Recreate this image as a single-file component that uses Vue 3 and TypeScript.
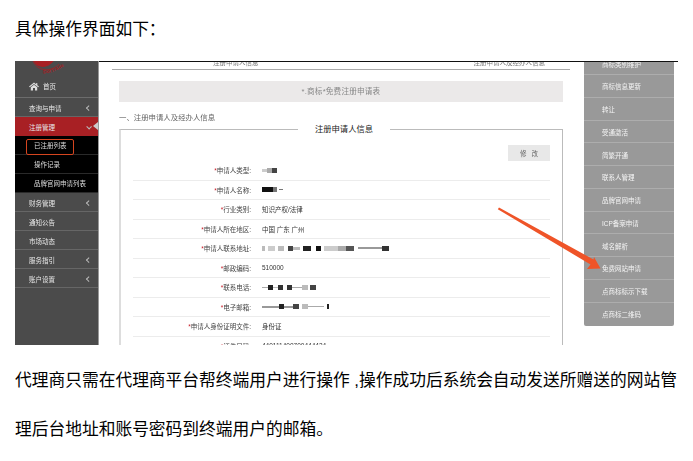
<script setup lang="ts">
interface Seg { w: number; c: string; h?: number }
interface Row { label: string; value?: string; segs?: Seg[] }

const navBefore = [{ t: '查询与申请', arrow: true }]
const subNav = ['已注册列表', '操作记录', '品牌官网申请列表']
const navAfter = [
  { t: '财务管理', arrow: true },
  { t: '通知公告', arrow: false },
  { t: '市场动态', arrow: false },
  { t: '服务指引', arrow: true },
  { t: '账户设置', arrow: true },
]
const rows: Row[] = [
  { label: '申请人类型', segs: [{ w: 5, c: '#ccc', h: 3 }, { w: 5, c: '#aaa' }, { w: 5, c: '#444' }] },
  { label: '申请人名称', segs: [{ w: 11, c: '#111' }, { w: 4, c: '#777' }, { w: 2, c: '#fff' }, { w: 4, c: '#777', h: 1 }] },
  { label: '行业类别', value: '知识产权/法律' },
  { label: '申请人所在地区', value: '中国 广东 广州' },
  {
    label: '申请人联系地址',
    segs: [
      { w: 3, c: '#bbb' }, { w: 3, c: '#fff' }, { w: 7, c: '#ccc' }, { w: 3, c: '#fff' }, { w: 6, c: '#bbb' }, { w: 4, c: '#fff' },
      { w: 5, c: '#444' }, { w: 7, c: '#bbb', h: 3 }, { w: 3, c: '#fff' }, { w: 8, c: '#222' }, { w: 5, c: '#fff' }, { w: 5, c: '#111' }, { w: 3, c: '#fff' },
      { w: 14, c: '#ccc' }, { w: 8, c: '#aaa' }, { w: 8, c: '#555' }, { w: 4, c: '#fff' },
      { w: 24, c: '#999', h: 2 }, { w: 7, c: '#333' },
    ],
  },
  { label: '邮政编码', value: '510000' },
  {
    label: '联系电话',
    segs: [
      { w: 6, c: '#aaa', h: 1 }, { w: 5, c: '#222' }, { w: 5, c: '#bbb', h: 1 }, { w: 5, c: '#333' }, { w: 4, c: '#fff' },
      { w: 5, c: '#333' }, { w: 10, c: '#aaa', h: 1 }, { w: 6, c: '#bbb' }, { w: 2, c: '#fff' }, { w: 6, c: '#444' },
    ],
  },
  {
    label: '电子邮箱',
    segs: [
      { w: 17, c: '#999', h: 2 }, { w: 5, c: '#222' }, { w: 9, c: '#999', h: 2 }, { w: 6, c: '#444' }, { w: 3, c: '#fff' },
      { w: 6, c: '#bbb' }, { w: 16, c: '#aaa', h: 1 }, { w: 3, c: '#fff' }, { w: 2, c: '#222' },
    ],
  },
  { label: '申请人身份证明文件', value: '身份证' },
  { label: '证件号码', value: '440111400700444424' },
]
const menu = ['商标类别维护', '商标信息更新', '转让', '受通激活', '简繁开通', '联系人管理', '品牌官网申请', 'ICP备案申请', '域名解析', '免费网站申请', '点商标标示下载', '点商标二维码']
</script>

<template>
  <div class="page" lang="zh-CN">
    <p class="intro">具体操作界面如下：</p>

    <div class="stage">
      <aside class="side">
        <div class="logo">
          <svg width="83" height="15" viewBox="0 0 83 15">
            <path d="M18 -2 C20 8 34 9 40 -2 Z" fill="#a82024" />
            <path d="M18 0 C22 10 36 12 44 3" fill="none" stroke="#a82024" stroke-width="0.8" />
            <path id="logoCurve" d="M28 12.5 C36 12.5 46 8.5 54 1" fill="none" />
            <text class="logo-text"><textPath href="#logoCurve">DotTrade</textPath></text>
          </svg>
        </div>
        <div class="home">
          <svg width="10" height="9" viewBox="0 0 10 9">
            <path d="M5 0.5 L7.2 2.3 V1 H8.3 V3.2 L10 4.6 L9.2 5.3 L5 1.9 L0.8 5.3 L0 4.6 Z M1.8 5.2 L5 2.7 L8.2 5.2 V8.6 H6 V6 H4 V8.6 H1.8 Z" fill="#ddd" />
          </svg>
          <span>首页</span>
        </div>
        <div v-for="n in navBefore" :key="n.t" class="nav">
          <span>{{ n.t }}</span><i v-if="n.arrow" class="chev" />
        </div>
        <div class="nav active">
          <span>注册管理</span><i class="chev down" /><b class="caret" />
        </div>
        <div v-for="(s, i) in subNav" :key="s" class="sub" :class="{ mark: i === 0 }">
          <span>{{ s }}</span>
        </div>
        <div v-for="n in navAfter" :key="n.t" class="nav">
          <span>{{ n.t }}</span><i v-if="n.arrow" class="chev" />
        </div>
      </aside>

      <div class="right">
        <main class="main">
          <div class="clipped"><span>注册申请人信息</span><span>注册申请人及经办人信息</span></div>
          <div class="band">*.商标*免费注册申请表</div>
          <div class="section">一、注册申请人及经办人信息</div>
          <section class="box">
            <h3 class="legend">注册申请人信息</h3>
            <div class="tools"><button class="edit">修 改</button></div>
            <div v-for="r in rows" :key="r.label" class="row">
              <label class="lbl"><em>*</em>{{ r.label }}:</label>
              <span v-if="r.value" class="val">{{ r.value }}</span>
              <span v-else class="mask">
                <i v-for="(s, i) in r.segs" :key="i" :style="{ width: s.w + 'px', height: (s.h ?? 5) + 'px', background: s.c }" />
              </span>
            </div>
          </section>
        </main>
        <nav class="menu">
          <div v-for="m in menu" :key="m" class="mi"><span>{{ m }}</span></div>
        </nav>
      </div>

      <svg class="arrow" width="663" height="284" viewBox="15 61 663 284">
        <path d="M499 207.4 L593.5 259.5 L594 257 L600.5 268.5 L587 269 L590.5 264.5 L497.8 209.2 Z" fill="#ef5428" />
      </svg>
    </div>

    <p class="para">代理商只需在代理商平台帮终端用户进行操作 ,操作成功后系统会自动发送所赠送的网站管理后台地址和账号密码到终端用户的邮箱。</p>
  </div>
</template>

<style scoped>
.page {
  width: 693px;
  height: 461px;
  overflow: hidden;
  padding: 0 15px;
  box-sizing: border-box;
  font-family: "Liberation Sans", "Noto Sans CJK SC", sans-serif;
  background: #fff;
  color: #000;
}
.intro {
  margin: 0;
  height: 61px;
  padding-top: 18px;
  box-sizing: border-box;
  font-size: 16.74px;
  line-height: 24px;
}
.para {
  margin: 11px 0 0;
  font-size: 16.74px;
  line-height: 49px;
}
.stage {
  position: relative;
  display: flex;
  width: 663px;
  height: 284px;
  overflow: hidden;
  filter: blur(0.45px);
}
.side {
  width: 84px;
  flex: none;
  background: #4b4b4b;
  border-right: 1px solid #999;
  box-sizing: border-box;
  color: #e8e8e8;
  font-size: 6.5px;
}
.logo {
  height: 14px;
  overflow: hidden;
}
.logo svg { display: block; }
.logo-text {
  font-size: 4.8px;
  font-weight: 700;
  fill: #a82024;
  letter-spacing: 0.3px;
}
.home {
  display: flex;
  align-items: center;
  gap: 4px;
  height: 23px;
  padding-left: 14px;
  border-bottom: 1px solid #6c6c6c;
  box-sizing: border-box;
}
.nav {
  position: relative;
  display: flex;
  align-items: center;
  justify-content: space-between;
  height: 19px;
  padding: 1px 8px 0 14px;
  border-bottom: 1px solid #666;
  box-sizing: border-box;
}
.nav.active {
  background: #a82024;
  border-bottom: 0;
}
.chev {
  width: 2.5px;
  height: 2.5px;
  border-left: 1px solid #bbb;
  border-bottom: 1px solid #bbb;
  transform: rotate(45deg);
}
.chev.down { transform: rotate(-45deg); }
.caret {
  position: absolute;
  right: 0;
  top: 5px;
  border: 4.5px solid transparent;
  border-right: 5px solid #ccc;
  border-left: 0;
}
.sub {
  position: relative;
  display: flex;
  align-items: center;
  height: 19px;
  padding-left: 19px;
  background: #000;
  color: #ddd;
  border-bottom: 1px solid #2a2a2a;
  box-sizing: border-box;
}
.sub.mark::after {
  content: "";
  position: absolute;
  left: 10.5px;
  top: 3px;
  width: 48px;
  height: 15.5px;
  border: 1px solid #d5451f;
  border-radius: 2px;
  box-sizing: border-box;
}
.right {
  flex: 1;
  display: flex;
  align-items: flex-start;
  min-width: 0;
  height: 284px;
  border-top: 1px solid #111;
  box-sizing: border-box;
  padding-right: 4px;
}
.main {
  flex: 1;
  min-width: 0;
  height: 283px;
  overflow: hidden;
  padding: 0 21px 0 20px;
  background: #fff;
}
.clipped {
  display: flex;
  justify-content: space-between;
  height: 7px;
  margin: 0 -7px;
  padding: 0 25px 0 101px;
  border-bottom: 1px solid #aaa;
  font-size: 6.5px;
  line-height: 1px;
  color: #777;
  overflow: hidden;
}
.band {
  margin-top: 11px;
  height: 21px;
  line-height: 21px;
  text-align: center;
  background: #ebe9e9;
  color: #888;
  font-size: 7.6px;
  letter-spacing: 0.2px;
}
.section {
  height: 27px;
  line-height: 31px;
  font-size: 7.4px;
  color: #666;
}
.box {
  position: relative;
  padding: 15px 12px 0;
  border: 1px solid #bbb;
  border-left: 2px solid #ddd;
  border-bottom: 0;
  height: 240px;
}
.legend {
  position: absolute;
  left: 177px;
  top: -7px;
  width: 92px;
  margin: 0;
  background: #fff;
  text-align: center;
  font-size: 8.3px;
  line-height: 12px;
  font-weight: 400;
  color: #222;
}
.tools {
  display: flex;
  justify-content: flex-end;
}
.edit {
  width: 42px;
  height: 16px;
  padding: 0;
  border: 0;
  background: #e8e8e8;
  color: #666;
  font: inherit;
  font-size: 6.5px;
  word-spacing: 3px;
}
.row {
  display: flex;
  align-items: center;
  height: 19.5px;
  border-bottom: 1px solid #ececec;
  box-sizing: border-box;
  font-size: 6.5px;
}
.lbl {
  width: 118px;
  text-align: right;
  color: #444;
}
.lbl em {
  color: #c8202a;
  font-style: normal;
}
.val {
  margin-left: 11px;
  color: #333;
}
.mask {
  display: flex;
  align-items: center;
  margin-left: 11px;
}
.mask i { display: block; }
.menu {
  flex: none;
  width: 90px;
  height: 264px;
  background: #999;
  border-radius: 0 0 2px 2px;
  color: #f4f4f4;
  font-size: 6.5px;
}
.mi {
  display: flex;
  align-items: center;
  height: 22.75px;
  padding: 1px 0 0 18px;
  border-bottom: 1px solid #adadad;
  box-sizing: border-box;
}
.mi:first-child {
  height: 13px;
  padding-top: 0;
  align-items: flex-start;
  line-height: 5px;
  overflow: hidden;
}
.mi:last-child { border-bottom: 0; }
.arrow {
  position: absolute;
  left: 0;
  top: 0;
  pointer-events: none;
}
</style>
